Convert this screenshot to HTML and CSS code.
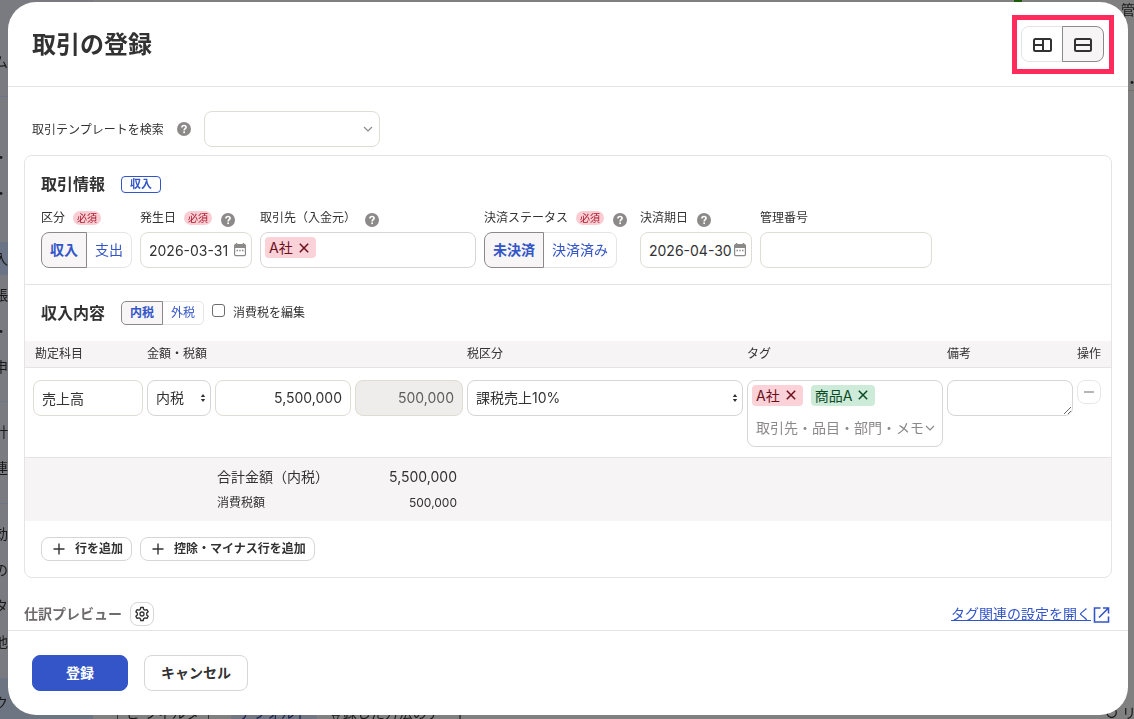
FILE: index.html
```html
<!DOCTYPE html>
<html lang="ja">
<head>
<meta charset="utf-8">
<title>取引の登録</title>
<link rel="stylesheet" href="styles.css">
</head>
<body>
<svg class="defs" aria-hidden="true">
  <symbol id="help" viewBox="0 0 16 16"><circle cx="8" cy="8" r="7" fill="#8c8989"/><path d="M5.9 6.5C5.9 5.2 6.8 4.5 8 4.5s2.1.7 2.1 1.8c0 1.4-1.9 1.5-1.9 3.1" fill="none" stroke="#fff" stroke-width="1.6"/><rect x="7.3" y="10.4" width="1.7" height="1.7" fill="#fff"/></symbol>
  <symbol id="calendar" viewBox="0 0 14 16"><path d="M1 3h12v3H1z" fill="#8c8989"/><rect x="1.600" y="2.600" width="10.800" height="11" rx="1" fill="none" stroke="#8c8989" stroke-width="1.200"/><path d="M3.500 1v2M10.500 1v2" stroke="#8c8989" stroke-width="1.500"/><path d="M3.500 8.500h1.500M6.200 8.500h1.500M9 8.500h1.500" stroke="#8c8989" stroke-width="1.500"/></symbol>
  <symbol id="close" viewBox="0 0 10 10"><path d="M.8.8l8.400 8.400M9.200.8L.8 9.200" stroke="currentColor" stroke-width="1.500"/></symbol>
  <symbol id="chevron" viewBox="0 0 10 10"><path d="M1 3l4 4 4-4" fill="none" stroke="#8c8989" stroke-width="1.200"/></symbol>
  <symbol id="updown" viewBox="0 0 6 10"><path d="M3 1l2.200 3H.8zM3 9l2.200-3H.8z" fill="#323232"/></symbol>
  <symbol id="plus" viewBox="0 0 12 12"><path d="M6 .5v11M.5 6h11" stroke="#323232" stroke-width="1.400"/></symbol>
</svg>

<div class="page" aria-hidden="true">
  <div class="side">
    <div class="side-group first"><span>ム</span></div>
    <div class="side-group"><span>・</span><span>・</span></div>
    <div class="side-current"><span>入</span></div>
    <div class="side-group tight"><span>帳</span><span>・</span><span>申</span></div>
    <div class="side-group"><span>計</span><span>連</span></div>
    <div class="side-group"><span>効</span><span>の</span><span>タ</span><span>他</span></div>
    <div class="side-last"><span>ク</span></div>
  </div>
  <div class="page-main">
    <div class="page-top"><i class="page-mark"></i><span>管</span></div>
    <div class="page-line"><span>・</span></div>
    <div class="page-bottom"><span class="page-filter">ビ フィルタ</span><span class="page-pill">デフォルト</span><span>登録した方法のデート</span><span class="page-list">○ リ</span></div>
  </div>
</div>

<div class="overlay">
<div class="modal" role="dialog" aria-labelledby="title">
  <header class="modal-head">
    <h1 id="title">取引の登録</h1>
    <div class="highlight">
      <div class="seg">
        <button type="button" aria-label="左右表示"><svg width="20" height="20" viewBox="0 0 20 20" fill="none" stroke="#323232" stroke-width="2"><rect x="2" y="5" width="17" height="12" rx="1.500"/><path d="M11 5v12M2 11h9"/></svg></button>
        <button type="button" class="on" aria-label="上下表示"><svg width="20" height="20" viewBox="0 0 20 20" fill="none" stroke="#323232" stroke-width="2"><rect x="2" y="5" width="16" height="12" rx="1.500"/><path d="M2 11h16"/></svg></button>
      </div>
    </div>
  </header>

  <main class="modal-body">
    <div class="template">
      <label for="tpl">取引テンプレートを検索</label>
      <svg class="help"><use href="#help"/></svg>
      <div class="stack tpl-box"><input id="tpl" class="input" type="text"><svg class="chev"><use href="#chevron"/></svg></div>
    </div>

    <div class="card">
      <section class="info">
        <div class="sec-title"><h2>取引情報</h2><span class="kind">収入</span></div>
        <div class="fields">
          <div class="field">
            <div class="label"><span>区分</span><span class="req">必須</span></div>
            <div class="seg"><button type="button" class="on">収入</button><button type="button">支出</button></div>
          </div>
          <div class="field date">
            <div class="label"><label for="d1">発生日</label><span class="req">必須</span><svg class="help"><use href="#help"/></svg></div>
            <div class="stack"><input id="d1" class="input" type="text" value="2026-03-31"><svg class="cal"><use href="#calendar"/></svg></div>
          </div>
          <div class="field partner">
            <div class="label"><label for="partner">取引先（入金元）</label><svg class="help"><use href="#help"/></svg></div>
            <div class="tagbox"><span class="tag red">A社<button type="button" aria-label="A社を削除"><svg><use href="#close"/></svg></button></span><input id="partner" type="text"></div>
          </div>
          <div class="field status">
            <div class="label"><span>決済ステータス</span><span class="req">必須</span><svg class="help"><use href="#help"/></svg></div>
            <div class="seg"><button type="button" class="on">未決済</button><button type="button">決済済み</button></div>
          </div>
          <div class="field date">
            <div class="label"><label for="d2">決済期日</label><svg class="help"><use href="#help"/></svg></div>
            <div class="stack"><input id="d2" class="input" type="text" value="2026-04-30"><svg class="cal"><use href="#calendar"/></svg></div>
          </div>
          <div class="field number">
            <div class="label"><label for="num">管理番号</label></div>
            <input id="num" class="input" type="text">
          </div>
        </div>
      </section>

      <section>
        <div class="sec-title content-title">
          <h2>収入内容</h2>
          <div class="seg small"><button type="button" class="on">内税</button><button type="button">外税</button></div>
          <input id="edit" class="check" type="checkbox"><label for="edit">消費税を編集</label>
        </div>
        <table class="lines">
          <colgroup><col class="c-account"><col class="c-amount"><col><col class="c-tag"><col class="c-note"><col class="c-op"></colgroup>
          <thead><tr><th>勘定科目</th><th>金額・税額</th><th>税区分</th><th>タグ</th><th>備考</th><th>操作</th></tr></thead>
          <tbody><tr>
            <td><input class="input" type="text" value="売上高" aria-label="勘定科目"></td>
            <td><div class="amounts">
              <div class="stack incl"><select class="input gray" aria-label="内税・外税"><option>内税</option></select><svg class="ud"><use href="#updown"/></svg></div>
              <input class="input num" type="text" value="5,500,000" aria-label="金額">
              <input class="input num tax" type="text" value="500,000" aria-label="税額" disabled>
            </div></td>
            <td><div class="stack"><select class="input gray" aria-label="税区分"><option>課税売上10%</option></select><svg class="ud"><use href="#updown"/></svg></div></td>
            <td><div class="tagbox multi">
              <div class="tags"><span class="tag red">A社<button type="button" aria-label="A社を削除"><svg><use href="#close"/></svg></button></span><span class="tag green">商品A<button type="button" aria-label="商品Aを削除"><svg><use href="#close"/></svg></button></span></div>
              <div class="tag-entry"><input type="text" placeholder="取引先・品目・部門・メモ" aria-label="タグ"><svg><use href="#chevron"/></svg></div>
            </div></td>
            <td><textarea class="input gray" aria-label="備考"></textarea></td>
            <td><button type="button" class="btn icon minus" aria-label="行を削除"><svg width="12" height="12" viewBox="0 0 12 12"><path d="M1 6h10" stroke="#b8b5b6" stroke-width="2"/></svg></button></td>
          </tr></tbody>
          <tfoot><tr><td></td><td><dl><dt>合計金額（内税）</dt><dd>5,500,000</dd><dt class="sub">消費税額</dt><dd class="sub">500,000</dd></dl></td><td colspan="4"></td></tr></tfoot>
        </table>
        <div class="adds">
          <button type="button" class="btn add"><svg><use href="#plus"/></svg>行を追加</button>
          <button type="button" class="btn add"><svg><use href="#plus"/></svg>控除・マイナス行を追加</button>
        </div>
      </section>
    </div>

    <div class="preview">
      <h3>仕訳プレビュー</h3>
      <button type="button" class="btn icon" aria-label="設定"><svg width="16" height="16" viewBox="0 0 16 16" fill="none" stroke="#323232" stroke-width="1.300" stroke-linejoin="round"><path d="M6.700 1.500h2.600l.4 1.900 1.300.8 1.900-.6 1.300 2.200-1.500 1.300v1.800l1.500 1.300-1.300 2.200-1.900-.6-1.300.8-.4 1.900H6.700l-.4-1.900-1.300-.8-1.900.6-1.300-2.200 1.500-1.300V7.100L1.800 5.800l1.300-2.200 1.900.6 1.300-.8z"/><circle cx="8" cy="8" r="2"/></svg></button>
      <a href="#tags"><span>タグ関連の設定を開く</span><svg width="18" height="20" viewBox="0 0 18 20" fill="none" stroke="currentColor" stroke-width="1.600"><path d="M7.500 4H1.500v14h14v-5.500M10 4h5.500V9.500M15.500 4L6 13.500"/></svg></a>
    </div>
  </main>

  <footer class="modal-foot">
    <button type="submit" class="btn primary">登録</button>
    <button type="button" class="btn cancel">キャンセル</button>
  </footer>
</div>
</div>
</body>
</html>
```
FILE: styles.css
```css
* { box-sizing: border-box; }
body { margin: 0; background: #808080; color: #323232; font: 14px/20px Inter, "Noto Sans CJK JP", sans-serif; }
h1, h2, h3, dl, dd { margin: 0; }
button, input, select, textarea { font: inherit; color: inherit; margin: 0; }
svg { display: block; flex: none; }
.defs { position: absolute; width: 0; height: 0; }

/* Dimmed page behind the dialog */
.page { position: fixed; inset: 0; display: flex; overflow: hidden; color: #191919; }
.side { width: 93px; flex: none; background: #7a7b80; }
.side span { display: block; height: 36px; line-height: 36px; margin-left: -6px; }
.side-group { border-bottom: 1px solid #6c7687; padding: 14px 0 16px; }
.side-group.first { padding: 44px 0 16px; }
.side-group:nth-child(2) { padding: 42px 0 32px; border: 0; }
.side-current { background: #6b7486; height: 33px; margin-top: -1px; }
.side-current span { height: 33px; line-height: 33px; }
.side-group.tight { padding-top: 2px; }
.side-group:nth-child(5) { padding: 12px 0 17px; }
.side-group:nth-child(6) { padding: 12px 0 18px; }
.side-last { background: #6e7582; padding: 6px 0; }
.page-main { flex: 1; display: flex; flex-direction: column; }
.page-top { display: flex; justify-content: flex-end; height: 72px; margin-right: -1px; }
.page-mark { width: 8px; height: 3px; margin-right: 99px; background: #1b5c0a; }
.page-line { display: flex; justify-content: flex-end; height: 19px; border-bottom: 1px solid #77736b; margin-right: -5px; }
.page-bottom { display: flex; gap: 12px; align-items: center; margin-top: auto; height: 12px; padding-left: 24px; white-space: nowrap; }
.page-filter { border: 1px solid #333; padding: 0 8px; margin-right: 10px; }
.page-pill { background: #737783; color: #161e45; padding: 0 8px; }
.page-list { margin-left: auto; margin-right: -2px; }

.overlay { position: relative; min-height: 100vh; display: flex; padding: 2px 6px 4px 8px; }
.modal { flex: 1; min-width: 0; display: flex; flex-direction: column; background: #fff; border-radius: 28px; overflow: hidden; }
.modal-head { display: flex; align-items: center; justify-content: space-between; padding: 13px 14px 12px 24px; border-bottom: 1px solid #e4e4e4; }
h1 { font-size: 24px; line-height: 32px; }
.highlight { border: 5px solid #ff2b5c; padding: 6px 5px 7px 4px; }

.seg { display: flex; }
.seg button { height: 36px; padding: 0 8px; border: 1px solid #e4e4e4; background: #fff; color: #3355c8; white-space: nowrap; }
.seg button:first-child { border-radius: 8px 0 0 8px; }
.seg button:last-child { border-radius: 0 8px 8px 0; margin-left: -1px; }
.seg button.on { background: #f7f5f6; border-color: #8c8989; font-weight: 700; position: relative; }
.seg.small button { height: 24px; font-size: 12px; }
.seg.small button:first-child { border-radius: 5px 0 0 5px; }
.seg.small button:last-child { border-radius: 0 5px 5px 0; }
.highlight .seg button { padding: 0 10px; }

.modal-body { flex: 1; padding: 24px 16px 4px; }
.template { display: flex; align-items: center; gap: 12px; padding-left: 8px; font-size: 12px; }
.template label { padding-top: 2px; }
.tpl-box { width: 176px; }
.help { width: 16px; height: 16px; }
.stack { display: grid; align-items: center; justify-items: end; }
.stack > * { grid-area: 1 / 1; }
.stack svg { pointer-events: none; z-index: 1; }
.chev { width: 10px; height: 10px; margin-right: 7px; }
.cal { width: 14px; height: 16px; margin-right: 5px; }
.ud { width: 6px; height: 10px; margin-right: 5px; }
.input { display: block; width: 100%; height: 36px; min-width: 0; padding: 0 8px; border: 1px solid #dfdcd2; border-radius: 8px; background: #fff; font-size: 14px; appearance: none; }
.input.gray { border-color: #d7d6d6; }

.card { margin-top: 8px; border: 1px solid #e4e4e4; border-radius: 8px; overflow: hidden; }
.info { padding: 16px 16px 16px; border-bottom: 1px solid #e4e4e4; }
.sec-title { display: flex; align-items: center; }
h2 { width: 80px; font-size: 16px; line-height: 24px; }
.kind { border: 1px solid #3355c8; border-radius: 4px; padding: 0 8px; font-size: 11px; line-height: 15px; font-weight: 700; color: #3355c8; }
.fields { display: flex; gap: 8px; margin-top: 12px; }
.label { display: flex; align-items: center; gap: 8px; height: 20px; margin-bottom: 4px; font-size: 12px; white-space: nowrap; }
.label .help { margin-top: 4px; }
.req { padding: 0 4px; border-radius: 8px; background: #facdd3; color: #a8162c; font-size: 10px; line-height: 14px; }
.date { width: 112px; }
.partner { width: 216px; }
.status { width: 148px; }
.number { width: 172px; }
.tagbox { display: flex; height: 36px; padding: 4px; border: 1px solid #d7d6d6; border-radius: 8px; background: #fff; }
.tagbox input { flex: 1; min-width: 0; border: 0; padding: 0; background: none; outline: 0; }
.tagbox input::placeholder { color: #8c8989; opacity: 1; }
.tag { display: inline-flex; align-items: center; height: 21px; padding-left: 4px; border-radius: 4px; line-height: 21px; white-space: nowrap; }
.tag button { display: flex; padding: 0 7px 0 6px; border: 0; background: none; }
.tag button svg { width: 10px; height: 10px; }
.red { background: #fad2d7; color: #6e0f1d; }
.green { background: #ceebd9; color: #0b4a25; }

.content-title { padding: 16px 16px; font-size: 12px; }
.check { appearance: none; width: 13px; height: 13px; margin: 0 8px 5px; border: 1px solid #6e6b6c; border-radius: 3px; background: #fff; }
.lines { width: 100%; table-layout: fixed; border-collapse: collapse; }
.c-account { width: 120px; }
.c-amount { width: 320px; }
.c-tag { width: 200px; }
.c-note { width: 130px; }
.c-op { width: 36px; }
.lines thead, .lines tfoot { background: #f6f4f5; }
.lines tr { border-bottom: 1px solid #e4e4e4; }
.lines th { height: 26px; padding: 0 2px; font-size: 12px; line-height: 24px; font-weight: 400; text-align: left; white-space: nowrap; }
.lines th:first-child { padding-left: 10px; }
.lines td { padding: 12px 2px 10px; vertical-align: top; }
.lines td:first-child { padding-left: 8px; }
.amounts { display: flex; gap: 4px; }
.incl { width: 64px; flex: none; }
.num { text-align: right; }
.input.tax { width: 108px; flex: none; background: #efedeb; color: #5f5c5d; }
textarea.input { resize: both; }
.tagbox.multi { flex-direction: column; justify-content: space-between; height: 67px; }
.tags { display: flex; gap: 8px; }
.tag-entry { display: flex; align-items: center; height: 28px; padding: 0 3px 0 4px; }
.tag-entry svg { width: 10px; height: 10px; }
.lines tfoot tr { border: 0; }
.lines tfoot td { padding: 6px 8px 5px 72px; }
dl { display: grid; grid-template-columns: 1fr auto; line-height: 26px; }
dd { text-align: right; }
.sub { font-size: 12px; }
.adds { display: flex; gap: 8px; padding: 16px; }

.btn { display: inline-flex; align-items: center; justify-content: center; height: 36px; border: 1px solid #d7d6d6; border-radius: 8px; background: #fff; font-weight: 700; white-space: nowrap; }
.btn.add { height: 24px; padding: 0 8px 0 11px; gap: 10px; font-size: 12px; }
.add svg { width: 12px; height: 12px; }
.btn.icon { width: 24px; height: 24px; padding: 0; }
.btn.minus { border-color: #e8e7e7; }
.preview { display: flex; align-items: center; gap: 8px; margin-top: 24px; }
h3 { font-size: 14px; color: #6e6b6c; }
.preview a { display: flex; align-items: center; gap: 2px; margin-left: auto; padding-right: 1px; color: #3355c8; }
.modal-foot { display: flex; gap: 16px; padding: 24px; border-top: 1px solid #e4e4e4; }
.primary { width: 96px; background: #3355c8; border-color: #3355c8; color: #fff; }
.cancel { padding: 0 16px; }
```
